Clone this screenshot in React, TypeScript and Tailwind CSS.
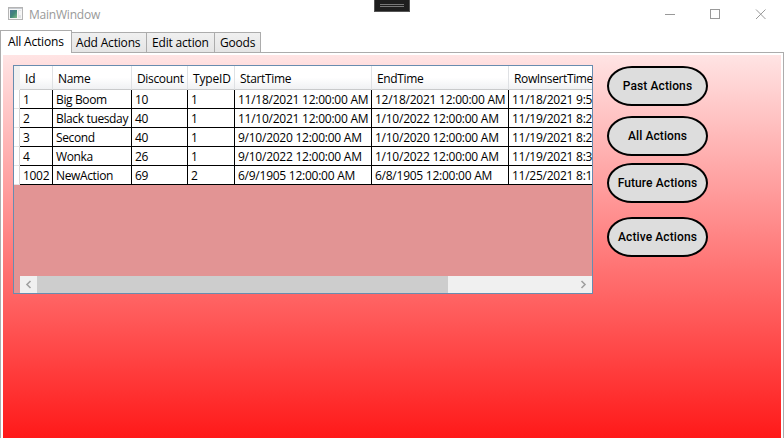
import React from "react";

const columns = [
  { name: "Id", cell: "w-[33px]", head: "tracking-[0px]", body: "tracking-[-0.3px]" },
  { name: "Name", cell: "w-[79px]", head: "tracking-[-0.3px]", body: "tracking-[-0.36px]" },
  { name: "Discount", cell: "w-[56px]", head: "tracking-[-0.35px]", body: "tracking-[-0.3px]" },
  { name: "TypeID", cell: "w-[47px]", head: "tracking-[-0.15px]", body: "tracking-[-0.3px]" },
  { name: "StartTime", cell: "w-[137px]", head: "tracking-[-0.35px]", body: "tracking-[-0.25px]" },
  { name: "EndTime", cell: "w-[137px]", head: "tracking-[-0.35px]", body: "tracking-[-0.25px]" },
  { name: "RowInsertTime", cell: "w-[84px]", head: "tracking-[-0.37px]", body: "tracking-[-0.25px]" },
];

const rows = [
  ["1", "Big Boom", "10", "1", "11/18/2021 12:00:00 AM", "12/18/2021 12:00:00 AM", "11/18/2021 9:5"],
  ["2", "Black tuesday", "40", "1", "11/10/2021 12:00:00 AM", "1/10/2022 12:00:00 AM", "11/19/2021 8:2"],
  ["3", "Second", "40", "1", "9/10/2020 12:00:00 AM", "1/10/2020 12:00:00 AM", "11/19/2021 8:2"],
  ["4", "Wonka", "26", "1", "9/10/2022 12:00:00 AM", "1/10/2022 12:00:00 AM", "11/19/2021 8:3"],
  ["1002", "NewAction", "69", "2", "6/9/1905 12:00:00 AM", "6/8/1905 12:00:00 AM", "11/25/2021 8:1"],
];

function TitleBar() {
  return (
    <header className="relative flex h-[30px] items-start">
      <svg className="mt-[7px] ml-2 shrink-0" width="16" height="14" viewBox="0 0 16 14">
        <defs>
          <linearGradient id="pane" x1="0" y1="0" x2="1" y2="1">
            <stop offset="0" stopColor="#4a7396" />
            <stop offset="0.5" stopColor="#3f8579" />
            <stop offset="1" stopColor="#7dbb85" />
          </linearGradient>
        </defs>
        <rect x="0.5" y="0.5" width="14" height="12" fill="#f6f6f6" stroke="#b4b4b4" />
        <rect x="1" y="1" width="13" height="1" fill="#c6cad0" />
        <rect x="2" y="3" width="7" height="8" fill="url(#pane)" />
        <rect x="10" y="3" width="3" height="8" fill="#dfe2e5" />
        <rect x="11" y="4" width="2" height="4" fill="#f4f4f4" />
      </svg>
      <span className="mt-[6px] ml-[5px] text-[12px] leading-[18px] tracking-[-0.22px] text-[#999]">MainWindow</span>
      <div className="absolute top-0 left-[374px] flex h-3 w-9 flex-col items-center gap-px border border-t-0 border-[#555] bg-[#1e1e1e] pt-1">
        <div className="h-px w-6 bg-[#777]" />
        <div className="h-px w-6 bg-[#777]" />
      </div>
      <svg className="mt-[9px] mr-[17px] ml-auto" width="102" height="11" viewBox="0 0 102 11" fill="none" stroke="#999">
        <path d="M0 5.5h10M45.5 0.5h9v9h-9z" shapeRendering="crispEdges" />
        <path d="M91 0.5l9.5 9.5M100.5 0.5l-9.5 9.5" />
      </svg>
    </header>
  );
}

function Tabs() {
  return (
    <nav className="relative flex h-[23px] items-end text-[12px] leading-4 tracking-[-0.18px]">
      <div className="absolute bottom-0 left-0 h-px w-full bg-[#acacac]" />
      <div className="relative flex h-[23px] w-[72px] border border-b-0 border-[#acacac] bg-white pt-[3px] pl-[7px] whitespace-nowrap">All Actions</div>
      <div className="relative flex h-[21px] w-[75px] border border-l-0 border-[#acacac] bg-linear-to-b/srgb from-[#f0f0f0] to-[#e5e5e5] pt-[2px] pl-1 whitespace-nowrap">Add Actions</div>
      <div className="relative flex h-[21px] w-[68px] border border-l-0 border-[#acacac] bg-linear-to-b/srgb from-[#f0f0f0] to-[#e5e5e5] pt-[2px] pl-[5px] whitespace-nowrap">Edit action</div>
      <div className="relative flex h-[21px] w-[46px] border border-l-0 border-[#acacac] bg-linear-to-b/srgb from-[#f0f0f0] to-[#e5e5e5] pt-[2px] pl-[5px] whitespace-nowrap">Goods</div>
    </nav>
  );
}

function DataGrid() {
  return (
    <div className="mt-[10px] ml-[10px] flex h-[229px] w-[580px] shrink-0 flex-col overflow-hidden border border-[#688caf] bg-[#e29494] text-[12px] leading-4">
      <div className="flex h-6 shrink-0">
        <div className="w-[6px] shrink-0 bg-[#f0f0f0]" />
        {columns.map((c) => (
          <div key={c.name} className={`${c.cell} ${c.head} shrink-0 border-r border-b border-r-[#dfe1e4] border-b-[#c9cacb] bg-linear-to-b/srgb from-white from-50% to-[#f0f1f3] pt-[5px] pl-[5px] whitespace-nowrap`}>
            {c.name}
          </div>
        ))}
      </div>
      {rows.map((r) => (
        <div key={r[0]} className="flex h-[19px] shrink-0">
          <div className="w-[6px] shrink-0 border-r border-b border-r-[#d5d5d5] border-b-[#e4e4e4] bg-white" />
          {r.map((v, i) => (
            <div key={i} className={`${columns[i].cell} ${columns[i].body} shrink-0 border-r border-b border-black bg-white pt-[2px] pl-[3px] whitespace-nowrap`}>
              {v}
            </div>
          ))}
        </div>
      ))}
      <div className="mt-auto ml-[6px] flex h-[17px] shrink-0 bg-[#f0f0f0]">
        <svg width="17" height="17" fill="none" stroke="#a0a0a0" strokeWidth="1.6"><path d="M10.5 5L7 8.5l3.5 3.5" /></svg>
        <div className="w-[411px] bg-[#cdcdcd]" />
        <svg className="ml-auto" width="17" height="17" fill="none" stroke="#a0a0a0" strokeWidth="1.6"><path d="M6.5 5L10 8.5 6.5 12" /></svg>
      </div>
    </div>
  );
}

function PillButton({ label, space }: { label: string; space: string }) {
  return (
    <button className={`${space} flex h-10 w-[101px] items-center justify-center border-2 border-black bg-[#ddd] font-[Roboto,sans-serif] text-[12px] font-medium tracking-[0.1px] whitespace-nowrap text-black [border-radius:25px/20px]`}>
      {label}
    </button>
  );
}

export default function App() {
  return (
    <div className="flex h-[438px] w-[784px] flex-col overflow-hidden bg-white font-['Open_Sans','Noto_Sans',sans-serif] text-black">
      <TitleBar />
      <Tabs />
      <main className="flex min-h-0 flex-1 border-x border-[#acacac] px-[2px] pt-[2px]">
        <div className="flex flex-1 items-start bg-linear-to-b/srgb from-[#ffe4e4] to-[#ff1919]">
          <DataGrid />
          <div className="ml-[14px] flex flex-col">
            <PillButton label="Past Actions" space="mt-[11px]" />
            <PillButton label="All Actions" space="mt-[10px]" />
            <PillButton label="Future Actions" space="mt-[7px]" />
            <PillButton label="Active Actions" space="mt-[14px]" />
          </div>
        </div>
      </main>
    </div>
  );
}
